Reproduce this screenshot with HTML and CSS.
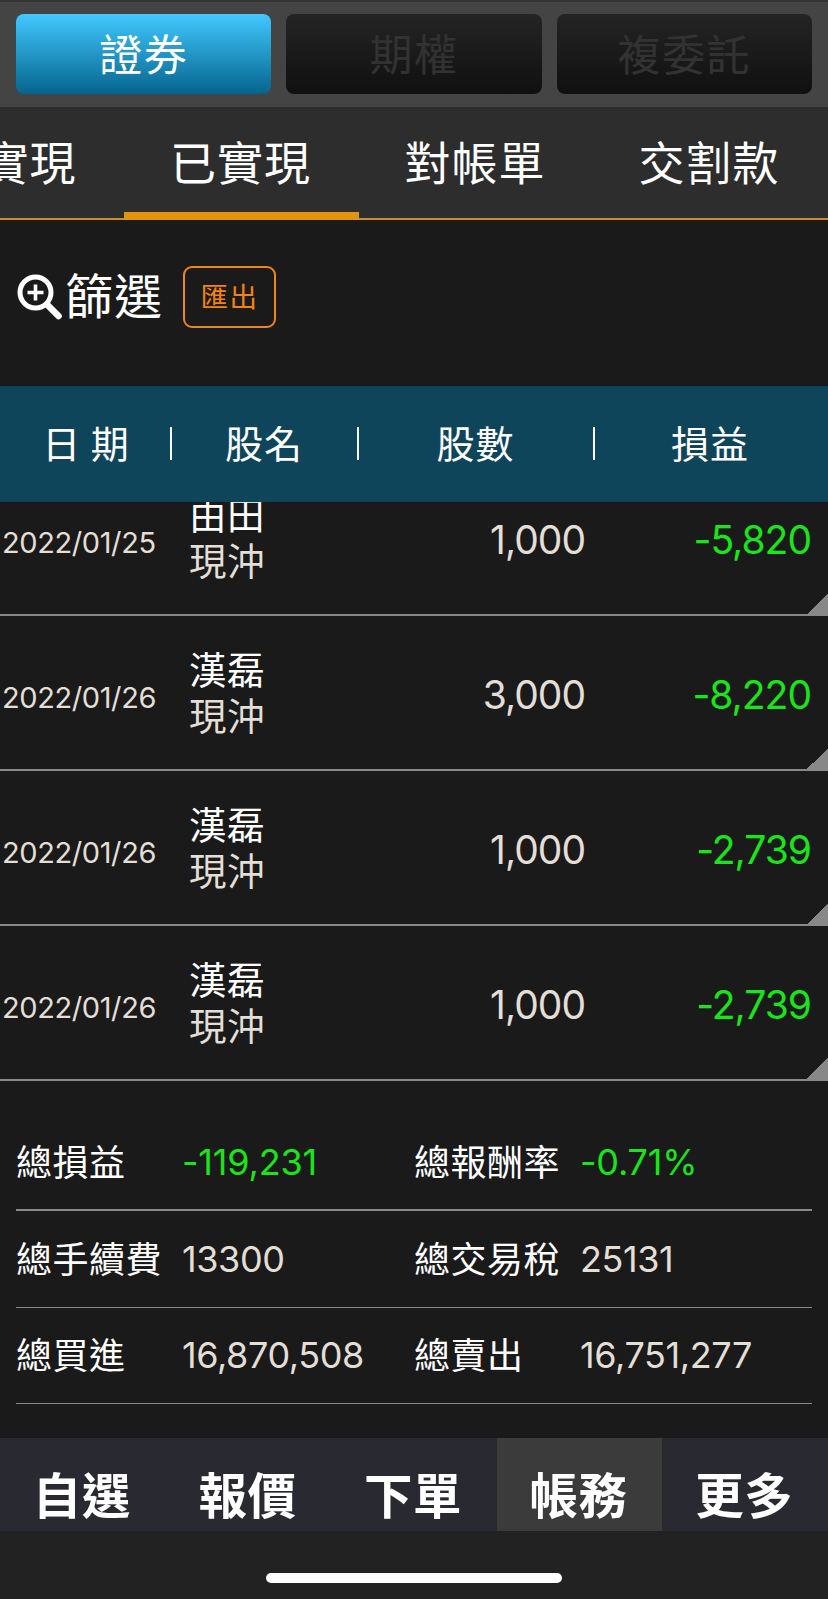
FILE: index.html
```html
<!DOCTYPE html>
<html lang="zh-Hant">

<head>
    <meta charset="utf-8">
    <title>帳務</title>
    <link rel="stylesheet" href="styles.css">
</head>

<body>

    <div class="market">
        <button class="market-btn active">證券</button>
        <button class="market-btn">期權</button>
        <button class="market-btn">複委託</button>
    </div>

    <div class="tabs">
        <div class="tab">未實現</div>
        <div class="tab active">已實現</div>
        <div class="tab">對帳單</div>
        <div class="tab">交割款</div>
    </div>

    <div class="tools">
        <svg class="zoom-icon" width="46" height="48" viewBox="0 0 46 48">
            <circle cx="18.5" cy="19.5" r="15.5" fill="none" stroke="#fff" stroke-width="5" />
            <path d="M10.5 19.5H26.5M18.5 11.5V27.5" stroke="#fff" stroke-width="3.6" />
            <path d="M30 31.5L41.5 43" stroke="#fff" stroke-width="6.6" stroke-linecap="round" />
        </svg>
        <span class="filter">篩選</span>
        <button class="export">匯出</button>
    </div>

    <div class="row-grid list-head">
        <div>日 期</div>
        <div>股名</div>
        <div>股數</div>
        <div>損益</div>
    </div>

    <div class="list">
        <div class="row-grid row">
            <div class="date">2022/01/25</div>
            <div class="name">由田<span>現沖</span></div>
            <div class="num">1,000</div>
            <div class="num profit">-5,820</div>
        </div>
        <div class="row-grid row">
            <div class="date">2022/01/26</div>
            <div class="name">漢磊<span>現沖</span></div>
            <div class="num">3,000</div>
            <div class="num profit">-8,220</div>
        </div>
        <div class="row-grid row">
            <div class="date">2022/01/26</div>
            <div class="name">漢磊<span>現沖</span></div>
            <div class="num">1,000</div>
            <div class="num profit">-2,739</div>
        </div>
        <div class="row-grid row">
            <div class="date">2022/01/26</div>
            <div class="name">漢磊<span>現沖</span></div>
            <div class="num">1,000</div>
            <div class="num profit">-2,739</div>
        </div>
    </div>

    <div class="summary">
        <div class="sum-row first">
            <div class="label">總損益</div>
            <div class="value down">-119,231</div>
            <div class="label">總報酬率</div>
            <div class="value down">-0.71%</div>
        </div>
        <div class="sum-row">
            <div class="label">總手續費</div>
            <div class="value">13300</div>
            <div class="label">總交易稅</div>
            <div class="value">25131</div>
        </div>
        <div class="sum-row">
            <div class="label">總買進</div>
            <div class="value">16,870,508</div>
            <div class="label">總賣出</div>
            <div class="value">16,751,277</div>
        </div>
    </div>

    <div class="nav">
        <div class="nav-item">自選</div>
        <div class="nav-item">報價</div>
        <div class="nav-item">下單</div>
        <div class="nav-item active">帳務</div>
        <div class="nav-item">更多</div>
    </div>
    <div class="home">
        <div class="home-bar"></div>
    </div>

</body>

</html>
```
FILE: styles.css
```css
* {
    box-sizing: border-box;
}

body {
    margin: 0;
    height: 1599px;
    display: flex;
    flex-direction: column;
    overflow: hidden;
    background-color: #1a1a1a;
    color: #ffffff;
    font-family: Inter, "Noto Sans CJK TC", sans-serif;
}

button {
    font-family: inherit;
    padding: 0;
}

/* market switch */
.market {
    height: 107px;
    display: flex;
    gap: 15px;
    padding: 12px 16px 13px;
    border-top: 2px solid #333333;
    background-color: #444444;
}

.market-btn {
    flex: 1;
    height: 80px;
    padding-bottom: 5px;
    border: none;
    border-radius: 8px;
    background: linear-gradient(#242424, #101010);
    color: #323232;
    font-family: "Noto Sans CJK TC", sans-serif;
    font-size: 43px;
    font-weight: 400;
    letter-spacing: 1.5px;
}

.market-btn.active {
    background: linear-gradient(#42c8ff, #05648e);
    color: #ffffff;
}

/* tabs, scrolled a little to the left */
.tabs {
    height: 113px;
    display: flex;
    margin-left: -110px;
    background-color: #2d2d2d;
    border-bottom: 2px solid #cc8b2c;
}

.tab {
    flex: 0 0 234px;
    height: 113px;
    padding: 20px 2px 0 0;
    text-align: center;
    font-family: "Noto Sans CJK TC", sans-serif;
    font-size: 46px;
    line-height: 66px;
    letter-spacing: 1px;
}

.tab.active {
    flex-basis: 235px;
    border-bottom: 8px solid #e29410;
}

/* filter and export */
.tools {
    height: 166px;
    display: flex;
    align-items: center;
    padding: 0 0 12px 17px;
}

.zoom-icon {
    flex: none;
}

.filter {
    width: 120px;
    padding: 0 0 9px 2px;
    font-family: "Noto Sans CJK TC", sans-serif;
    font-size: 48px;
    line-height: 62px;
    letter-spacing: 1px;
}

.export {
    width: 93px;
    height: 62px;
    padding-bottom: 4px;
    border: 2px solid #f08519;
    border-radius: 9px;
    background: none;
    color: #f5820a;
    font-family: "Noto Sans CJK TC", sans-serif;
    font-size: 27.5px;
    letter-spacing: 1.5px;
}

/* list */
.row-grid {
    flex: none;
    display: grid;
    grid-template-columns: 172px 187px 236px 233px;
    align-items: center;
}

.list-head {
    height: 116px;
    padding-bottom: 1px;
    background-color: #0f455b;
    font-family: "Noto Sans CJK TC", sans-serif;
    font-size: 38px;
    text-align: center;
}

.list-head div {
    height: 33px;
    line-height: 29px;
    letter-spacing: 1px;
}

.list-head div + div {
    padding-right: 3px;
    box-shadow: -2px 0 0 #ffffff;
}

.list {
    flex: none;
    height: 579px;
    display: flex;
    flex-direction: column;
    justify-content: flex-end;
    overflow: hidden;
}

.row {
    height: 155px;
    border-bottom: 2px solid #888888;
    color: #e3ded6;
    background: linear-gradient(135deg, transparent 50%, #888888 50%) right bottom / 21px 21px no-repeat;
}

.date {
    padding: 9px 0 0 2px;
    font-size: 29px;
    letter-spacing: -0.4px;
}

.name {
    padding: 0 0 4px 17px;
    color: #ffffff;
    font-family: "Noto Sans CJK TC", sans-serif;
    font-size: 37.5px;
    line-height: 46px;
    letter-spacing: 0.5px;
}

.name span {
    display: block;
    color: #e3ded6;
}

.num {
    padding: 3px 10px 0 0;
    text-align: right;
    font-size: 39px;
    letter-spacing: -1px;
}

.num.profit {
    padding-right: 17px;
    color: #19e619;
}

/* totals */
.summary {
    height: 357px;
    padding: 33px 16px 0;
}

.sum-row {
    height: 96.5px;
    display: grid;
    grid-template-columns: 166px 232px 166px 1fr;
    align-items: center;
    border-bottom: 1px solid #888888;
    font-family: "Noto Sans CJK TC", sans-serif;
    font-size: 36px;
    line-height: 50px;
}

.sum-row.first {
    height: 97px;
    border-bottom-width: 2px;
}

.label {
    padding-bottom: 4px;
    letter-spacing: 0.5px;
}

.value {
    color: #e3ded6;
    font-family: Inter, sans-serif;
    letter-spacing: -0.4px;
}

.value.down {
    color: #19e619;
    letter-spacing: -0.2px;
}

/* bottom menu */
.nav {
    height: 93px;
    display: flex;
    background-color: #292932;
}

.nav-item {
    flex: 1;
    padding: 20px 2px 0 0;
    text-align: center;
    font-family: "Noto Sans CJK TC", sans-serif;
    font-size: 48.5px;
    font-weight: 700;
    line-height: 70px;
    letter-spacing: 0.5px;
}

.nav-item.active {
    background-color: #3b3b3b;
}

.home {
    height: 68px;
    padding-top: 42px;
    background-color: #222222;
}

.home-bar {
    width: 296px;
    height: 10px;
    margin: 0 auto;
    border-radius: 5px;
    background-color: #ffffff;
}
```
